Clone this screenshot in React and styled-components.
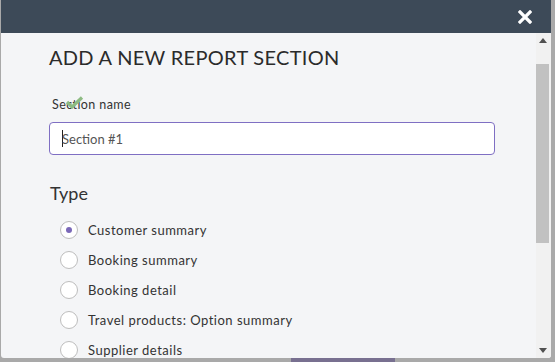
import React from "react";
import styled, { createGlobalStyle } from "styled-components";

const Global = createGlobalStyle`
  html, body { margin: 0; padding: 0; }
  body { background: #aaaaaa; font-family: "Lato", "Open Sans", sans-serif; overflow: hidden; }
`;

const Page = styled.div`
  width: 555px;
  height: 362px;
  display: flex;
  flex-direction: column;
  background: #a9a9a9;
`;

const Modal = styled.div`
  margin-left: 1px;
  width: 550px;
  height: 358px;
  display: flex;
  flex-direction: column;
  background: #f4f5f7;
  border-radius: 0 0 3px 3px;
  overflow: hidden;
`;

const Header = styled.div`
  height: 33px;
  flex: none;
  background: #3d4a58;
  display: flex;
  align-items: center;
  justify-content: flex-end;
  padding-right: 18px;
`;

const Close = styled.button`
  border: none;
  background: none;
  padding: 0;
  width: 16px;
  height: 16px;
  display: flex;
  align-items: center;
  justify-content: center;
  cursor: pointer;
`;

const Body = styled.div`
  flex: 1;
  display: flex;
  min-height: 0;
`;

const Content = styled.div`
  flex: 1;
  padding: 12px 0 0 48px;
  overflow: hidden;
`;

const Title = styled.h2`
  margin: 0;
  font-family: "Lato", sans-serif;
  font-weight: 400;
  font-size: 20px;
  line-height: 24px;
  color: #2b2b2b;
  letter-spacing: 0.3px;
`;

const Field = styled.div`
  position: relative;
  margin-top: 27px;
`;

const Label = styled.label`
  display: block;
  font-size: 12.5px;
  line-height: 14px;
  color: #333;
  padding: 2px 0 0 3px;
  margin: 0 0 10px;
  letter-spacing: 0.4px;
`;

const Check = styled.svg`
  position: absolute;
  left: 16px;
  top: 0;
`;

const Input = styled.div`
  box-sizing: border-box;
  width: 446px;
  height: 33px;
  border: 1px solid #7f6fc3;
  border-radius: 4px;
  background: #fff;
  display: flex;
  align-items: center;
  padding-left: 12px;
  font-size: 13px;
  color: #555;
`;

const Caret = styled.span`
  display: inline-block;
  width: 1px;
  height: 17px;
  background: #222;
  margin-right: -1px;
`;

const SectionTitle = styled.h3`
  margin: 27px 0 0 1px;
  font-weight: 400;
  font-size: 18px;
  line-height: 22px;
  color: #333;
`;

const RadioList = styled.div`
  margin-top: 17px;
  display: flex;
  flex-direction: column;
  gap: 12px;
  padding-left: 11px;
`;

const RadioRow = styled.div`
  display: flex;
  align-items: center;
  gap: 10px;
  height: 18px;
  font-size: 13px;
  color: #333;
  letter-spacing: 0.5px;
`;

const Circle = styled.span`
  box-sizing: border-box;
  flex: none;
  width: 18px;
  height: 18px;
  border-radius: 50%;
  border: 1px solid #bdbdbd;
  background: #fff;
  display: flex;
  align-items: center;
  justify-content: center;
  &::after {
    content: "";
    width: 6px;
    height: 6px;
    border-radius: 50%;
    background: ${(p) => (p.$checked ? "#7a68b8" : "transparent")};
  }
`;

const Scrollbar = styled.div`
  width: 15px;
  flex: none;
  background: #f1f1f1;
  display: flex;
  flex-direction: column;
`;

const Arrow = styled.div`
  height: 15px;
  flex: none;
  display: flex;
  align-items: center;
  justify-content: center;
  padding-right: 2px;
`;

const Track = styled.div`
  flex: 1;
  padding-top: 16px;
`;

const Thumb = styled.div`
  width: 13px;
  height: 179px;
  background: #c1c1c1;
`;

const Backdrop = styled.div`
  flex: 1;
  display: flex;
`;

const PurpleBar = styled.div`
  margin-left: 291px;
  width: 104px;
  background: #787090;
`;

const options = [
  "Customer summary",
  "Booking summary",
  "Booking detail",
  "Travel products: Option summary",
  "Supplier details",
];

export default function App() {
  return (
    <>
      <Global />
      <Page>
        <Modal>
          <Header>
            <Close aria-label="Close">
              <svg width="14" height="14" viewBox="0 0 14 14">
                <path d="M2 2 L12 12 M12 2 L2 12" stroke="#fff" strokeWidth="3.2" strokeLinecap="square" />
              </svg>
            </Close>
          </Header>
          <Body>
            <Content>
              <Title>ADD A NEW REPORT SECTION</Title>
              <Field>
                <Label>Section name</Label>
                <Check width="19" height="13" viewBox="0 0 19 13">
                  <path d="M2 6 L7 11 L17 1.5" fill="none" stroke="#8dbb83" strokeWidth="3.2" />
                </Check>
                <Input>
                  <Caret />
                  Section #1
                </Input>
              </Field>
              <SectionTitle>Type</SectionTitle>
              <RadioList>
                {options.map((o, i) => (
                  <RadioRow key={o}>
                    <Circle $checked={i === 0} />
                    {o}
                  </RadioRow>
                ))}
              </RadioList>
            </Content>
            <Scrollbar>
              <Arrow>
                <svg width="8" height="5" viewBox="0 0 8 5"><path d="M0 5 L4 0 L8 5 Z" fill="#505050" /></svg>
              </Arrow>
              <Track>
                <Thumb />
              </Track>
              <Arrow>
                <svg width="8" height="5" viewBox="0 0 8 5"><path d="M0 0 L4 5 L8 0 Z" fill="#505050" /></svg>
              </Arrow>
            </Scrollbar>
          </Body>
        </Modal>
        <Backdrop>
          <PurpleBar />
        </Backdrop>
      </Page>
    </>
  );
}
